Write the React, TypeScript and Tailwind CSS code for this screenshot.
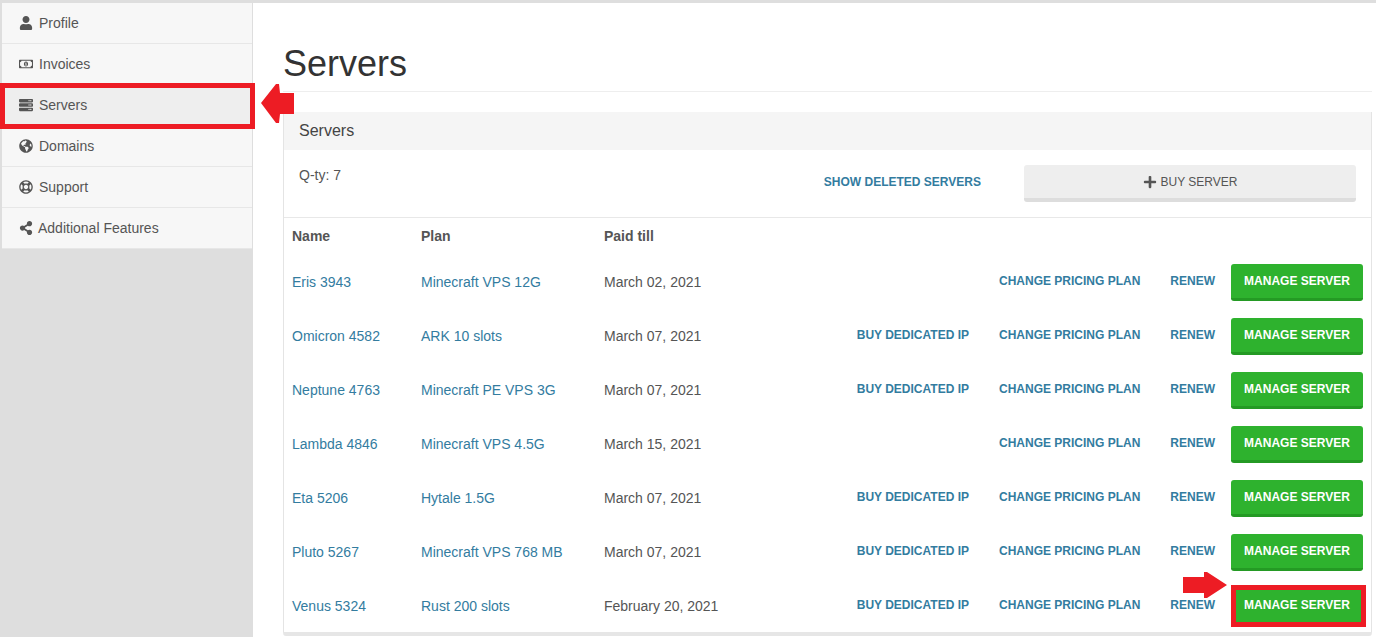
import { FaUser, FaRegMoneyBillAlt, FaServer, FaGlobeAmericas, FaRegLifeRing, FaShareAlt, FaPlus } from "react-icons/fa";

const nav = [
  { label: "Profile", icon: FaUser },
  { label: "Invoices", icon: FaRegMoneyBillAlt },
  { label: "Servers", icon: FaServer, active: true },
  { label: "Domains", icon: FaGlobeAmericas },
  { label: "Support", icon: FaRegLifeRing },
  { label: "Additional Features", icon: FaShareAlt },
];

const servers = [
  { name: "Eris 3943", plan: "Minecraft VPS 12G", paid: "March 02, 2021", ip: false },
  { name: "Omicron 4582", plan: "ARK 10 slots", paid: "March 07, 2021", ip: true },
  { name: "Neptune 4763", plan: "Minecraft PE VPS 3G", paid: "March 07, 2021", ip: true },
  { name: "Lambda 4846", plan: "Minecraft VPS 4.5G", paid: "March 15, 2021", ip: false },
  { name: "Eta 5206", plan: "Hytale 1.5G", paid: "March 07, 2021", ip: true },
  { name: "Pluto 5267", plan: "Minecraft VPS 768 MB", paid: "March 07, 2021", ip: true },
  { name: "Venus 5324", plan: "Rust 200 slots", paid: "February 20, 2021", ip: true },
];

function LeftArrow() {
  return (
    <svg className="absolute left-[261px] top-[83px]" width="34" height="41" viewBox="0 0 34 41">
      <path d="M0 20 L15 1 L18 1 L19 10 L33 10 L33 31 L19 31 L18 40 L15 40 Z" fill="#ed1c24" />
    </svg>
  );
}

function RightArrow() {
  return (
    <svg className="absolute left-[1183px] top-[571px]" width="45" height="28" viewBox="0 0 45 28">
      <path d="M0 6 L21 6 L21 1 L24 1 L44 14 L24 27 L21 27 L21 22 L0 22 Z" fill="#ed1c24" />
    </svg>
  );
}

export default function App() {
  return (
    <div className="relative flex h-[637px] w-[1376px] overflow-hidden bg-white pt-[3px] font-['Liberation_Sans',Arial,sans-serif] text-sm text-[#555]">
      <div className="absolute inset-x-0 top-0 h-[3px] bg-[#dedede]" />

      <aside className="w-[253px] shrink-0 bg-[#dedede] pl-[2px] pr-px">
        {nav.map((item) => (
          <div
            key={item.label}
            className={`flex h-[41px] items-center border-b border-[#e7e7e7] pl-[17px] ${
              item.active ? "bg-[#eeeeee]" : "bg-[#f7f7f7]"
            }`}
          >
            <span className="flex w-5 items-center">
              <item.icon className="text-[14px] text-[#555]" />
            </span>
            <span className={item.label === "Additional Features" ? "-ml-px" : ""}>{item.label}</span>
          </div>
        ))}
      </aside>

      <main className="min-w-0 flex-1 pl-[30px] pr-[4px]">
        <h1 className="flex h-[89px] items-end border-b border-[#eeeeee] pb-[7px] text-[36px] leading-[40px] text-[#333]">
          Servers
        </h1>

        <section className="mt-5 h-[524px] rounded-b-[3px] border-x border-b-4 border-x-[#e4e4e4] border-b-[#e6e6e6]">
          <div className="flex h-[38px] items-center bg-[#f5f5f5] pb-px pl-[15px] text-base text-[#444]">Servers</div>

          <div className="relative flex h-[68px] border-b border-[#e8e8e8] pl-[15px] pr-[15px]">
            <div className="pt-[17px] leading-[16px]">Q-ty: 7</div>
            <a className="ml-auto mr-[43px] mt-[25px] text-xs font-bold leading-[14px] text-[#337c9f]">SHOW DELETED SERVERS</a>
            <button className="mt-[15px] flex h-[37px] w-[332px] items-center justify-center gap-1 rounded-[3px] border-b-[4px] border-[#dddddd] bg-[#eeeeee] text-xs text-[#555]">
              <FaPlus className="text-[14px]" />
              BUY SERVER
            </button>
          </div>

          <table className="w-full table-fixed border-collapse">
            <colgroup>
              <col className="w-[129px]" />
              <col className="w-[183px]" />
              <col className="w-[160px]" />
              <col />
            </colgroup>
            <thead>
              <tr className="h-[37px] text-left font-bold">
                <th className="pb-[2px] pl-2">Name</th>
                <th className="pb-[2px] pl-2">Plan</th>
                <th className="pb-[2px] pl-2">Paid till</th>
                <th />
              </tr>
            </thead>
            <tbody>
              {servers.map((s, i) => {
                const highlighted = i === servers.length - 1;
                return (
                  <tr key={s.name} className="h-[54px]">
                    <td className="pl-2 text-[#337c9f]">{s.name}</td>
                    <td className="pl-2 text-[#337c9f]">{s.plan}</td>
                    <td className="pl-2">{s.paid}</td>
                    <td className="pr-2">
                      <div className="flex items-center justify-end text-xs font-bold text-[#337c9f]">
                        {s.ip && <a className="mr-[30px] pb-[2px]">BUY DEDICATED IP</a>}
                        <a className="mr-[30px] pb-[2px]">CHANGE PRICING PLAN</a>
                        <a className="mr-4 pb-[2px]">RENEW</a>
                        <button
                          className={`relative flex h-[37px] w-[132px] items-center justify-center rounded-[3px] border-b-[3px] bg-[#2eb22e] pt-px text-xs font-bold text-white ${
                            highlighted ? "border-[#2eb22e]" : "border-[#249a24]"
                          }`}
                        >
                          MANAGE SERVER
                          {highlighted && (
                            <span className="absolute -bottom-[5px] -right-[3px] -top-[3px] left-0 border-[5px] border-[#ed1c24]" />
                          )}
                        </button>
                      </div>
                    </td>
                  </tr>
                );
              })}
            </tbody>
          </table>
        </section>
      </main>

      <div className="absolute left-0 top-[83px] h-[46px] w-[255px] border-[5px] border-[#ed1c24]" />
      <LeftArrow />
      <RightArrow />
    </div>
  );
}
